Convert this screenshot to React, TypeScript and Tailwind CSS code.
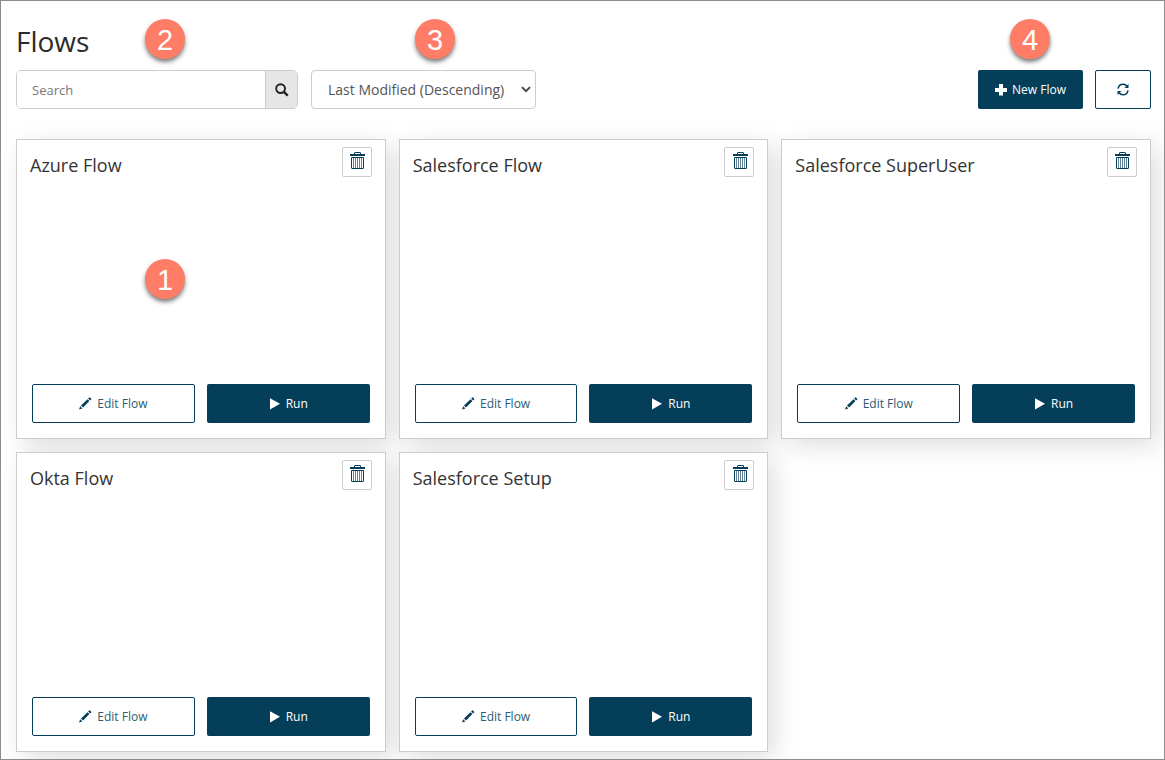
import React from "react";

const flows = ["Azure Flow", "Salesforce Flow", "Salesforce SuperUser", "Okta Flow", "Salesforce Setup"];

function SearchIcon() {
  return (
    <svg width="14" height="14" viewBox="0 0 14 14" fill="none" stroke="#222" className="block">
      <circle cx="5.6" cy="5.6" r="4.400" strokeWidth="1.9" />
      <path d="M8.8 8.8L12.8 12.600" strokeWidth="2.4" />
    </svg>
  );
}

function PlusIcon() {
  return (
    <svg width="12" height="12" viewBox="0 0 12 12" fill="currentColor" className="block">
      <path d="M4 0h4v4H12v4H8v3.500h-4V8H0V4h4z" />
    </svg>
  );
}

function RefreshIcon() {
  return (
    <svg width="12" height="13" viewBox="0 0 12 13" fill="none" stroke="#053e59" strokeWidth="1.500" className="block">
      <path d="M1 5.700C1.500 3 3.500 1.200 6 1.200C7.600 1.200 9 1.900 10 3.200" />
      <path d="M11 7.300C10.500 10 8.500 11.800 6 11.800C4.400 11.800 3 11.100 2 9.800" />
      <path d="M11.500 1V5H7.500z" fill="#053e59" stroke="none" />
      <path d="M.5 12V8H4.500z" fill="#053e59" stroke="none" />
    </svg>
  );
}

function PencilIcon() {
  return (
    <svg width="13" height="13" viewBox="0 0 13 13" fill="#053e59" className="block">
      <path d="M0 12.500L1.200 9.200L3.400 11.400z" />
      <path d="M2 8.500L8.500 2.200L10.400 4.100L4.100 10.600z" />
      <path d="M9.100 1.500L10.200 .5Q10.600 .1 11 .5L12.200 1.700Q12.500 2.100 12.200 2.500L11.100 3.500z" />
    </svg>
  );
}

function PlayIcon() {
  return (
    <svg width="10" height="12" viewBox="0 0 10 12" fill="currentColor" className="block">
      <path d="M0 .3L10 5.800L0 11.500z" />
    </svg>
  );
}

function TrashIcon() {
  return (
    <svg width="15" height="18" viewBox="0 0 15 18" fill="none" stroke="#053e59" className="block">
      <path d="M4.500 2V.9Q4.500 .5 5 .5H10Q10.500 .5 10.500 .9V2" strokeWidth="1" />
      <path d="M0 3H15" strokeWidth="2" />
      <path d="M1.500 5.500H13.500V16Q13.500 16.500 13 16.500H2Q1.500 16.500 1.500 16z" strokeWidth="1" />
      <path d="M3.500 6V16M5.500 6V16M7.500 6V16M9.500 6V16M11.500 6V16" strokeWidth=".9" strokeOpacity=".7" />
    </svg>
  );
}

function Badge({ n, className }: { n: number; className: string }) {
  return (
    <div
      className={`absolute flex h-10 w-10 items-center justify-center rounded-full bg-[#ff7c66] pt-[2px] font-['Liberation_Sans',sans-serif] text-[29px] leading-none text-white shadow-[0_3px_4px_rgba(0,0,0,0.5)] ${className}`}
    >
      {n}
    </div>
  );
}

function Card({ name }: { name: string }) {
  return (
    <section className="flex flex-col justify-between border border-[#ccc] bg-white px-[15px] pt-[7px] pb-[15px] shadow-[7px_7px_24px_rgba(0,0,0,0.13)]">
      <div className="-mr-[2px] -ml-[2px] flex items-start justify-between">
        <h2 className="pt-[5px] text-[18px] leading-[26px] text-[#333]">{name}</h2>
        <button className="flex h-[30px] w-[30px] items-start justify-center rounded-[2px] border border-[#ccc] bg-white pt-1 pl-[1.4px]">
          <TrashIcon />
        </button>
      </div>
      <div className="grid grid-cols-2 gap-3 text-[12px]">
        <button className="flex h-[39px] items-center justify-center gap-[5px] rounded-[2px] border border-[#053e59] bg-white text-[#2c5c74]">
          <PencilIcon />
          Edit Flow
        </button>
        <button className="flex h-[39px] items-center justify-center gap-[6px] rounded-[2px] bg-[#053e59] pl-px text-white">
          <PlayIcon />
          Run
        </button>
      </div>
    </section>
  );
}

export default function App() {
  return (
    <main className="relative h-[760px] w-[1165px] overflow-hidden border border-[#8c8c8c] bg-white pr-[13px] pl-[15px] font-['Open_Sans',sans-serif] text-[#222]">
      <h1 className="h-[69px] pt-[21px] text-[28px] leading-[38px] text-[#2b2b2b]">Flows</h1>
      <div className="flex h-[39px] items-stretch">
        <div className="flex w-[282px] overflow-hidden rounded-[5px] border border-[#ccc]">
          <input placeholder="Search" className="min-w-0 flex-1 bg-white pt-[2px] pl-[15px] text-[13px] placeholder:text-[#777] outline-none" />
          <button className="flex w-8 items-center justify-center border-l border-[#ccc] bg-[#e6e6e6]">
            <SearchIcon />
          </button>
        </div>
        <button className="ml-[13px] flex w-[225px] items-center justify-between rounded-[4px] border border-[#ccc] bg-white pr-[4px] pl-4 text-[14px] text-[#555]">
          Last Modified (Descending)
          <svg width="10" height="7" viewBox="0 0 10 7" fill="none" stroke="#444" strokeWidth="1.900">
            <path d="M1 1.200L5 5.200L9 1.200" />
          </svg>
        </button>
        <button className="mr-3 ml-auto flex w-[105px] items-center justify-center gap-[5px] rounded-[2px] bg-[#053e59] text-[12px] text-white">
          <PlusIcon />
          New Flow
        </button>
        <button className="flex w-[56px] items-center justify-center rounded-[2px] border border-[#053e59] bg-white">
          <RefreshIcon />
        </button>
      </div>
      <div className="mt-[30px] grid w-[1135px] auto-rows-[300px] grid-cols-3 gap-[13px]">
        {flows.map((f) => (
          <Card key={f} name={f} />
        ))}
      </div>
      <Badge n={1} className="top-[258px] left-[144px]" />
      <Badge n={2} className="top-[18px] left-[144px]" />
      <Badge n={3} className="top-[18px] left-[414px]" />
      <Badge n={4} className="top-[18px] left-[1009px]" />
    </main>
  );
}
